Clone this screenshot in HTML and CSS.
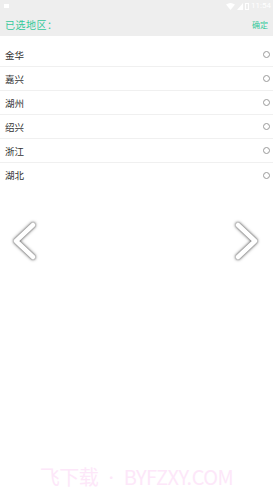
FILE: index.html
```html
<!DOCTYPE html>
<html>
<head>
<meta charset="utf-8">
<link rel="stylesheet" href="styles.css">
</head>
<body>
<div class="header">
  <div class="statusbar">
    <span class="notif"></span>
    <div class="sys">
      <svg class="wifi" width="9" height="7" viewBox="0 0 9 7"><path d="M0 1.5 Q4.5 -1.5 9 1.5 L4.5 7 Z" fill="#fff"/></svg>
      <svg class="signal" width="6" height="7" viewBox="0 0 6 7"><path d="M6 0 L6 7 L0 7 Z" fill="#fff"/></svg>
      <span class="battery"></span>
      <span class="time">11:54</span>
    </div>
  </div>
  <div class="titlebar">
    <span class="title">已选地区：</span>
    <span class="ok">确定</span>
  </div>
</div>
<ul class="list">
  <li class="row"><span>金华</span><span class="radio"></span></li>
  <li class="row"><span>嘉兴</span><span class="radio"></span></li>
  <li class="row"><span>湖州</span><span class="radio"></span></li>
  <li class="row"><span>绍兴</span><span class="radio"></span></li>
  <li class="row"><span>浙江</span><span class="radio"></span></li>
  <li class="row last"><span>湖北</span><span class="radio"></span></li>
</ul>
<div class="nav">
  <svg class="arrow" width="26" height="40" viewBox="0 0 26 40"><polyline points="21,4 4,20 21,36" fill="none" stroke="#fff" stroke-width="4.5" stroke-linecap="round" stroke-linejoin="round"/></svg>
  <svg class="arrow" width="26" height="40" viewBox="0 0 26 40"><polyline points="5,4 22,20 5,36" fill="none" stroke="#fff" stroke-width="4.5" stroke-linecap="round" stroke-linejoin="round"/></svg>
</div>
<div class="watermark">飞下载<span class="dot">•</span>BYFZXY.COM</div>
</body>
</html>
```
FILE: styles.css
```css
html, body {
  margin: 0;
  padding: 0;
  background: #fff;
  font-family: "Noto Sans CJK SC", "Noto Sans", sans-serif;
}
body {
  position: relative;
  height: 500px;
  overflow: hidden;
}
.header {
  background: #eeeeee;
  height: 36px;
}
.statusbar {
  height: 12px;
  display: flex;
  align-items: center;
  justify-content: space-between;
  padding: 0 2px 0 4px;
}
.notif {
  width: 5px;
  height: 4px;
  background: #fff;
  display: block;
}
.sys {
  display: flex;
  align-items: center;
  gap: 2px;
}
.battery {
  width: 4px;
  height: 7px;
  border: 1px solid #fff;
  box-sizing: border-box;
  display: block;
}
.time {
  color: #fff;
  font-size: 8px;
  line-height: 1;
  font-family: "Roboto", sans-serif;
}
.titlebar {
  height: 24px;
  display: flex;
  align-items: center;
  justify-content: space-between;
  padding: 0 5px 0 5px;
}
.title {
  color: #33c99a;
  font-size: 10px;
  letter-spacing: 0.5px;
}
.ok {
  color: #33c99a;
  font-size: 8px;
}
.list {
  list-style: none;
  margin: 7px 0 0 0;
  padding: 0;
}
.row {
  height: 24px;
  box-sizing: border-box;
  border-bottom: 1px solid #f0f0f0;
  display: flex;
  align-items: center;
  justify-content: space-between;
  padding: 0 3px 0 5px;
  font-size: 9.5px;
  color: #333;
}
.row.last {
  border-bottom: none;
}
.radio {
  width: 7px;
  height: 7px;
  border: 1px solid #9a9a9a;
  border-radius: 50%;
  box-sizing: border-box;
  display: block;
}
.nav {
  display: flex;
  justify-content: space-between;
  padding: 0 14px 0 12px;
  margin-top: 34px;
}
.arrow {
  display: block;
  filter: drop-shadow(0 0 1px #666) drop-shadow(0 0 1.5px #999);
}
.watermark {
  position: absolute;
  left: 0;
  right: 0;
  bottom: 10px;
  text-align: center;
  color: #fde7f9;
  font-size: 20px;
  line-height: 24px;
  font-family: "Noto Sans CJK SC", "Noto Sans", sans-serif;
  letter-spacing: -0.5px;
}
.dot {
  font-size: 12px;
  margin: 0 7px;
  vertical-align: 2px;
}
```
